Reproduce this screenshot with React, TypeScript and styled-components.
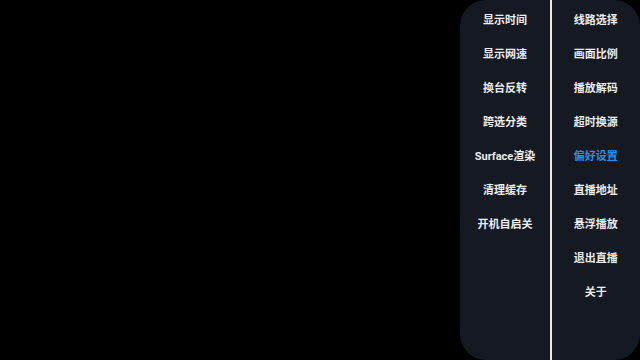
import React from "react";
import styled, { createGlobalStyle } from "styled-components";

const Global = createGlobalStyle`
  html, body { margin: 0; padding: 0; background: #000; }
  body { width: 640px; height: 360px; overflow: hidden; font-family: Roboto, "Noto Sans CJK SC", sans-serif; }
`;

const Screen = styled.div`
  width: 640px;
  height: 360px;
  background: #000;
  display: flex;
  justify-content: flex-end;
`;

const Panel = styled.div`
  width: 180px;
  height: 360px;
  background: #151a22;
  border-radius: 26px;
  display: grid;
  grid-template-columns: 90px 1.5px 1fr;
  overflow: hidden;
`;

const Column = styled.div`
  display: flex;
  flex-direction: column;
  padding-top: 2px;
`;

const Divider = styled.div`
  background: #e8e8e8;
`;

const Item = styled.div<{ $active?: boolean }>`
  height: 34px;
  display: flex;
  align-items: center;
  justify-content: center;
  font-size: 11px;
  font-weight: 700;
  color: ${(p) => (p.$active ? "#2391f0" : "#ececec")};
  white-space: nowrap;
`;

const left = ["显示时间", "显示网速", "换台反转", "跨选分类", "Surface渲染", "清理缓存", "开机自启关"];
const right = ["线路选择", "画面比例", "播放解码", "超时换源", "偏好设置", "直播地址", "悬浮播放", "退出直播", "关于"];

export default function App() {
  return (
    <>
      <Global />
      <Screen>
        <Panel>
          <Column>
            {left.map((t) => (
              <Item key={t}>{t}</Item>
            ))}
          </Column>
          <Divider />
          <Column>
            {right.map((t) => (
              <Item key={t} $active={t === "偏好设置"}>
                {t}
              </Item>
            ))}
          </Column>
        </Panel>
      </Screen>
    </>
  );
}
